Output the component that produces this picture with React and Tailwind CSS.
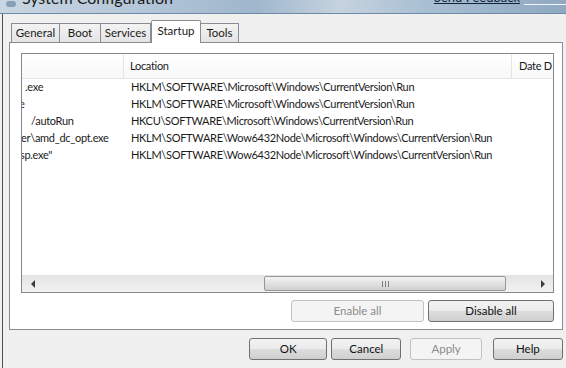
const tabs = [
  { label: "General", w: "w-[49px]" },
  { label: "Boot", w: "w-[42px]" },
  { label: "Services", w: "w-[51px]" },
  { label: "Startup", w: "w-[50px]", active: true },
  { label: "Tools", w: "w-[39px]" },
];

const rows = [
  { cmd: ".exe", off: "ml-[3px]", loc: "HKLM\\SOFTWARE\\Microsoft\\Windows\\CurrentVersion\\Run" },
  { cmd: "e", off: "-ml-[3px]", loc: "HKLM\\SOFTWARE\\Microsoft\\Windows\\CurrentVersion\\Run" },
  { cmd: "/autoRun", off: "ml-[9px]", loc: "HKCU\\SOFTWARE\\Microsoft\\Windows\\CurrentVersion\\Run" },
  { cmd: "er\\amd_dc_opt.exe", off: "-ml-[1px]", loc: "HKLM\\SOFTWARE\\Wow6432Node\\Microsoft\\Windows\\CurrentVersion\\Run" },
  { cmd: "sp.exe\"", off: "-ml-[2px]", loc: "HKLM\\SOFTWARE\\Wow6432Node\\Microsoft\\Windows\\CurrentVersion\\Run" },
];

function Btn({ children, disabled, className }) {
  return (
    <div
      className={`flex items-center justify-center rounded-[3px] border h-[22px] ${
        disabled
          ? "border-[#bfc3c6] bg-[#f4f4f4] text-[#8b8b8b]"
          : "border-[#707070] bg-[linear-gradient(#f2f2f2_0%,#ebebeb_50%,#dddddd_51%,#cfcfcf_100%)] text-[#111]"
      } ${className}`}
    >
      {children}
    </div>
  );
}

export default function App() {
  return (
    <div
      className="w-[566px] h-[368px] overflow-hidden bg-[#f0f0f0] text-[11.5px] text-[#1b1b1b] flex flex-col"
      style={{ fontFamily: 'Lato, "Noto Sans", sans-serif' }}
    >
      {/* title bar */}
      <div className="h-[14px] shrink-0 flex items-end bg-[linear-gradient(90deg,#c9d6e3_0%,#b4c6d8_25%,#9fb6cc_45%,#c6d3df_60%,#a9bfd3_75%,#8fa9c2_100%)] border-b border-[#6f8aa5] overflow-hidden relative">
        <div className="w-[10px] h-[6px] ml-[6px] mb-[6px] bg-[#8aa0b6] rounded-sm" />
        <span className="ml-[6px] text-[16px] leading-none text-[#1a1a1a] translate-y-[-7px]">System Configuration</span>
        <span className="ml-auto mr-[46px] text-[13px] leading-none text-[#10243a] underline translate-y-[-9px]">Send Feedback</span>
        <div className="absolute right-0 top-[4px] w-[42px] h-[1px] bg-[#f4f6f8]" />
      </div>

      <div className="flex-1 flex flex-col border-l border-[#4e4e4e] ml-[2px] pl-[6px] pr-[3px]">
        {/* tabs */}
        <div className="flex items-end h-[28px] pl-[2px]">
          {tabs.map((t) =>
            t.active ? (
              <div
                key={t.label}
                className={`${t.w} h-[23px] -mb-[1px] relative z-10 flex items-center justify-center bg-white border border-b-0 border-[#898c95] rounded-t-[2px] pb-[3px]`}
              >
                {t.label}
              </div>
            ) : (
              <div
                key={t.label}
                className={`${t.w} h-[19px] flex items-center justify-center bg-[linear-gradient(#f3f3f3,#e4e4e4)] border border-b-0 border-[#898c95] -ml-[1px] first:ml-0`}
              >
                {t.label}
              </div>
            )
          )}
        </div>

        {/* tab panel */}
        <div className="h-[288px] bg-white border border-[#898c95] flex flex-col pt-[10px] pl-[11px] pr-[8px]">
          <div className="h-[240px] border border-[#828790] flex flex-col bg-white text-[11px] tracking-[-0.3px]">
            <div className="h-[25px] flex items-center border-b border-[#e5e5e5] bg-[linear-gradient(#ffffff,#f7f8f9)]">
              <div className="w-[102px] h-full border-r border-[#e5e5e5]" />
              <div className="w-[388px] h-full flex items-center pl-[6px] border-r border-[#e5e5e5]">Location</div>
              <div className="flex-1 pl-[7px] overflow-hidden whitespace-nowrap">Date D</div>
            </div>
            <div className="flex-1 flex flex-col">
              {rows.map((r, i) => (
                <div key={i} className="h-[17px] flex items-center whitespace-nowrap">
                  <div className="w-[103px] overflow-hidden">
                    <div className={r.off}>{r.cmd}</div>
                  </div>
                  <div className="pl-[6px]">{r.loc}</div>
                </div>
              ))}
            </div>
            {/* horizontal scrollbar */}
            <div className="h-[17px] flex items-center bg-[linear-gradient(#e3e3e3,#f2f2f2)]">
              <div className="w-[17px] flex items-center justify-center pl-[4px]">
                <div className="w-0 h-0 border-y-[4px] border-y-transparent border-r-[4px] border-r-[#3c3c3c]" />
              </div>
              <div className="w-[225px]" />
              <div className="w-[242px] h-[15px] rounded-[2px] border border-[#979797] bg-[linear-gradient(#f3f3f3,#e2e2e2_50%,#d0d0d0)] flex items-center justify-center gap-[2px]">
                <div className="w-[1px] h-[6px] bg-[#7d7d7d]" />
                <div className="w-[1px] h-[6px] bg-[#7d7d7d]" />
                <div className="w-[1px] h-[6px] bg-[#7d7d7d]" />
              </div>
              <div className="flex-1 flex items-center justify-end pr-[8px]">
                <div className="w-0 h-0 border-y-[4px] border-y-transparent border-l-[4px] border-l-[#3c3c3c]" />
              </div>
            </div>
          </div>
          <div className="flex justify-end gap-[4px] mt-[7px] pr-[0px]">
            <Btn disabled className="w-[133px]">Enable all</Btn>
            <Btn className="w-[126px]">Disable all</Btn>
          </div>
        </div>

        {/* dialog buttons */}
        <div className="flex mt-[8px] pl-[240px] gap-[4px]">
          <Btn className="w-[79px]">OK</Btn>
          <Btn className="w-[71px]">Cancel</Btn>
          <Btn disabled className="w-[72px] ml-[5px]">Apply</Btn>
          <Btn className="w-[71px] ml-[7px]">Help</Btn>
        </div>
      </div>
    </div>
  );
}
